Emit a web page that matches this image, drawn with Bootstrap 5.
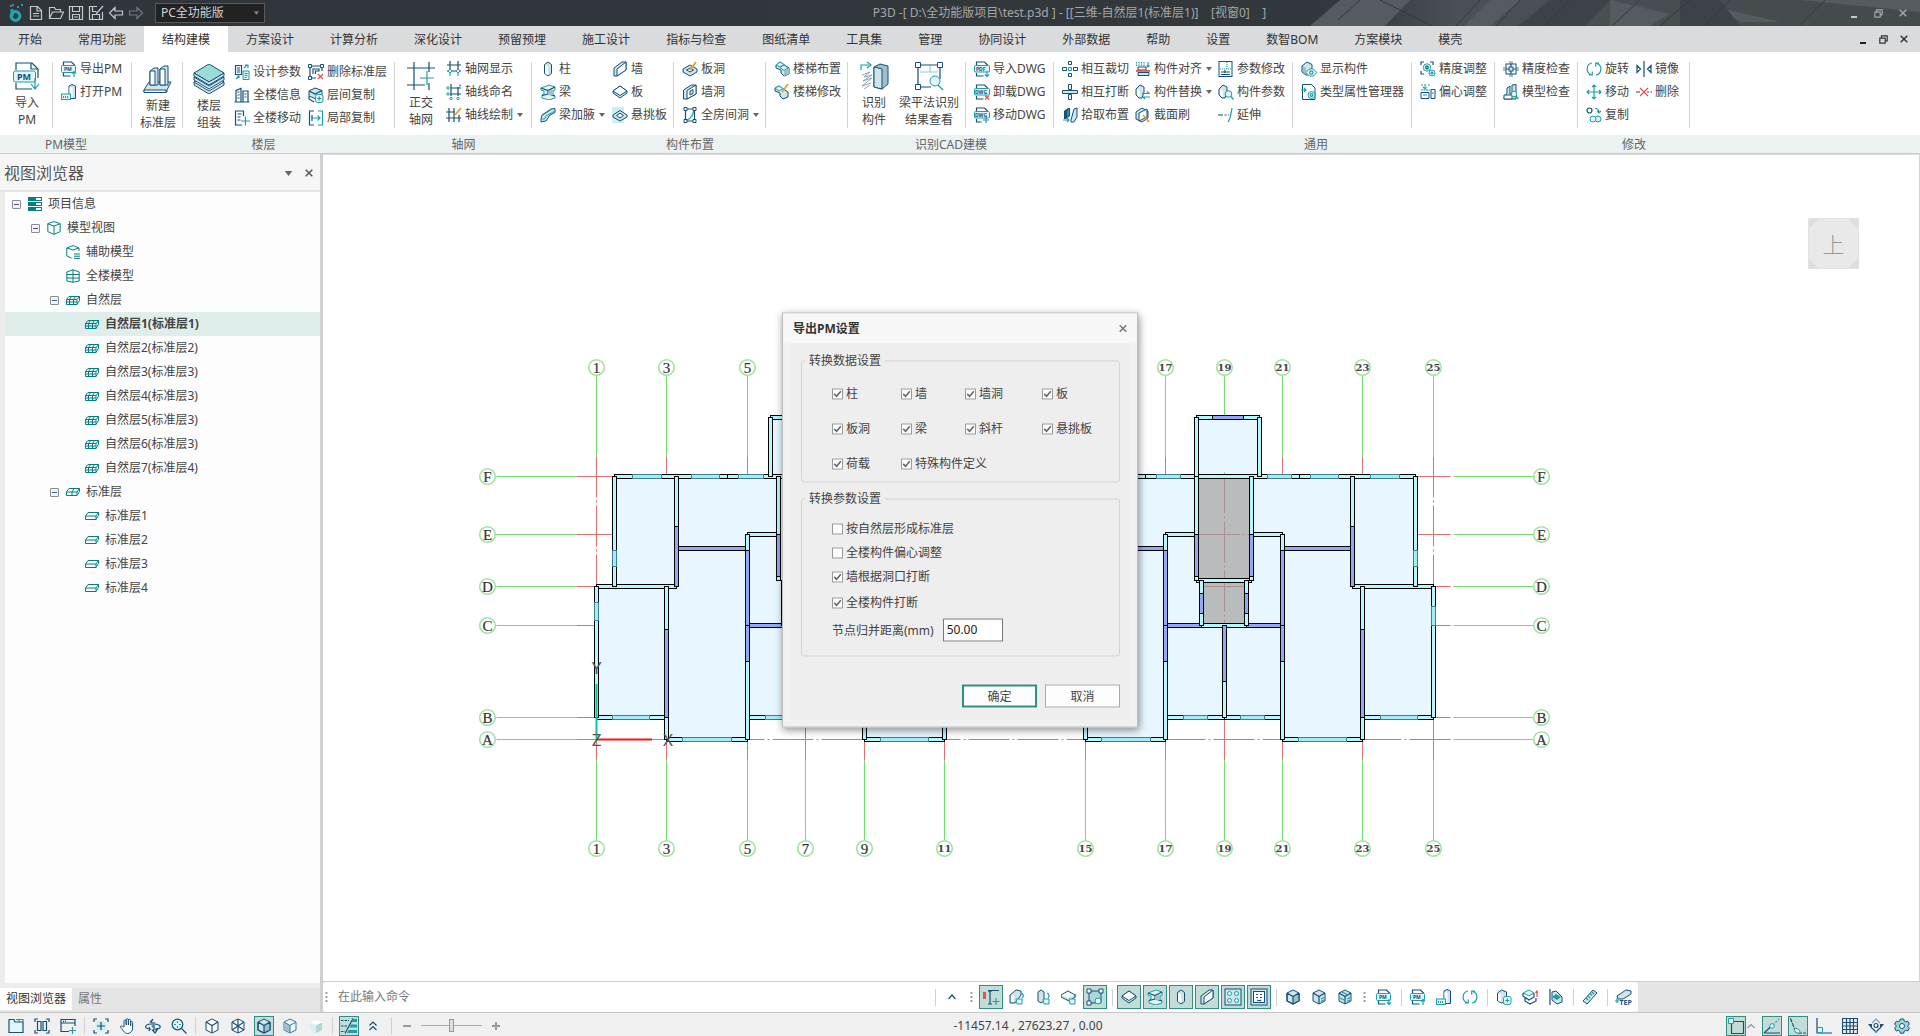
<!DOCTYPE html>
<html lang="zh-CN">
<head>
<meta charset="utf-8">
<meta name="viewport" content="width=device-width, initial-scale=1">
<title>P3D</title>
<link href="https://cdn.jsdelivr.net/npm/bootstrap@5.3.0/dist/css/bootstrap.min.css" rel="stylesheet">
<style>
:root{--navy:#14507a;--teal:#1b9fa8;--pale:#cfe5ea;--on:#c2ddd8;--on-line:#2f8f80}
body{font:12px/16px "Noto Sans","Noto Sans CJK SC",sans-serif;color:#444;background:#e5e5e5;overflow:hidden}
button,input,select{font:inherit;color:inherit}
svg{display:block;flex:none}
.sn{fill:none;stroke:var(--navy);stroke-width:1.2}
.st{fill:none;stroke:var(--teal);stroke-width:1.2}
.sf{fill:var(--pale);stroke:var(--navy);stroke-width:1}
.sw{fill:#fff;stroke:var(--navy);stroke-width:1}
.tw{fill:#dff5f6;stroke:var(--teal);stroke-width:1}
.ff{fill:#9fc0ca}
.fn{fill:var(--navy)}
.ft{fill:var(--teal)}
.sr{fill:none;stroke:#e8504a;stroke-width:1.2}
.so{fill:none;stroke:#f0992e;stroke-width:1.8}
.tg{fill:none;stroke:#008080;stroke-width:1}
.icon-text{font:bold 5px "Noto Sans",sans-serif;fill:var(--navy)}
.icon-text.mid-size{font-size:7px}
.icon-text.big-size{font-size:9px}
.i16{width:16px;height:16px}
.i28{width:30px;height:30px}
.plain-btn{border:0;background:none;padding:0;display:flex;align-items:center}

.title-bar{height:26px;background:linear-gradient(90deg,#2f3538 0,#32383b 70%,#4a5053 76%,#44494c 100%);color:#a4a7a9;position:relative}
.title-art{position:absolute;right:0;top:0;height:26px;width:640px}
.title-bar>*:not(.title-art){position:relative}
.logo{margin-left:8px}
.quick-icon{fill:none;stroke:#c5cacc;stroke-width:1.2}
.edition{width:110px;height:20px;margin-left:11px;background:#222;border:1px solid #5a5a5a;color:#d0d0d0;appearance:none;padding:0 5px;line-height:16px;
 background-image:url("data:image/svg+xml,%3Csvg xmlns='http://www.w3.org/2000/svg' viewBox='0 0 6 4'%3E%3Cpath d='M0 0h6L3 4z' fill='%23888'/%3E%3C/svg%3E");background-repeat:no-repeat;background-size:5px 4px;background-position:right 5px center}
.doc-title{white-space:pre}
.win-btns{gap:16px;padding-right:13px}
.menu-tabs{height:26px;background:#d9dbdc;color:#333}
.menu-tabs .nav-link{padding:0 18px;height:26px;line-height:27px;color:#333;border-radius:0}
.menu-tabs .nav-link.active{background:#fff}

.ribbon{background:#fff;border-bottom:1px solid #c9cccf}
.ribbon-body{height:83px;padding-top:5px}
.ribbon-part{display:flex;gap:7px;padding:0 7px 0 8px;position:relative}
.ribbon-part:last-child{flex-grow:1}
.ribbon-part::after{content:"";position:absolute;right:0;top:5px;height:66px;width:1px;background:#d4d4d4}
.ribbon-part.lowered>*{margin-top:3px}
.ribbon-part.roomy{padding:0 8px 0 9px}
.g-pm{width:132px}.g-floor{width:263px}.g-axis{width:137px}.g-place{width:316px}.g-cad{width:206px}.g-common{width:524px}.g-edit{width:112px}
.g-common .ribbon-part{padding-right:8px}
.g-common .ribbon-part:first-child{gap:6px}
.ribbon-col{display:flex;flex-direction:column}
.ribbon-col button{height:23px;gap:3px;white-space:nowrap}
.big-btn{flex-direction:column;min-width:36px;padding-top:4px;text-align:center;white-space:nowrap}
.big-btn span{margin-top:3px;line-height:17px}
.drop{width:6px;height:4px;margin-left:1px}
.ribbon-name{height:18px;background:#ecf1f2;text-align:center;line-height:19px;color:#666}

.side{width:323px;border-right:3px solid #d0d0d2;background:#ededed}
.side-head{height:38px;background:#f6f6f6;border-bottom:2px solid #e6e6e6;padding:2px 7px 0 4px;font-size:16px;color:#555}
.tree{background:#fdfdfd;margin:0 0 0 5px;line-height:24px}
.tree li{height:24px;display:flex;align-items:center;padding-left:7px}
.tree .lv1{padding-left:26px}.tree .lv2{padding-left:45px}.tree .lv3{padding-left:64px}
.tree .chosen{background:#e0eeeb;font-weight:bold}
.fold{width:9px;height:9px;border:1px solid #8c8c8c;border-radius:1px;background:linear-gradient(#3a56a0,#3a56a0) center/5px 1px no-repeat #f4f4f4;margin-right:7px;padding:0}
.fold.leaf{visibility:hidden}
.tree svg{width:14px;height:14px;margin-right:6px}
.side-tabs{height:29px;background:linear-gradient(#ededed 5px,#e5e5e5 5px);padding-top:5px}
.side-tabs .nav-link{padding:0 6px;height:22px;line-height:21px;color:#777}
.side-tabs .nav-link.active{background:#fff;color:#333}

.view-area{background:#fff;border-top:1px solid #dcdcdc;border-right:1px solid #d4d4d4;position:relative}
.plan{position:absolute;left:0;top:0}
.view-cube{position:absolute;right:60px;top:63px;width:51px;height:51px;border:1px solid #e2e2e2;color:#999;font-size:22px;font-weight:300;line-height:50px;text-align:center;
 background:linear-gradient(135deg,#dedede 7px,transparent 7px),linear-gradient(225deg,#dedede 7px,transparent 7px),linear-gradient(45deg,#dedede 7px,transparent 7px),linear-gradient(315deg,#dedede 7px,transparent 7px),#e9e9e9}
.slab{fill:#e8f6ff}.stair{fill:#b9bcbc}
.wc{fill:#b3f8ff;stroke:#000}.wb{fill:#92a8f8;stroke:#000}.wo{fill:#a5ecfa;stroke:#3f7f93}
.axr{stroke:#e86a6a;stroke-dasharray:41 3 2 3}.axrs{stroke:#e86a6a}.axg{stroke:#69e069}.axf{stroke:#b08f92;stroke-dasharray:41 3 2 3}
.axc{fill:#fff;stroke:#a4e0a4;stroke-width:1.6}
.axt{font:15px "Liberation Serif",serif;fill:#333;text-anchor:middle;stroke:#333;stroke-width:.2px}
.axt2{font:bold 10px "DejaVu Serif",serif;fill:#444;text-anchor:middle}
.ucs{font:17px "Noto Sans",sans-serif;fill:#555;text-anchor:middle}

.dock{height:31px;border-top:1px solid #cfcfcf;background:#e5e5e5}
.dock-bar{background:#fff;height:30px;gap:2px;padding-right:2px;border-radius:3px}
.command{border:0;outline:0;background:none;width:592px;padding:0}
.command::placeholder{color:#777}
.grip{width:3px;height:14px;background:radial-gradient(circle,#999 1px,transparent 1.2px) center/3px 4px;margin:0 4px}
.grip.lead-grip{margin:0 8px 0 2px}
.tool{width:24px;height:24px;border:1px solid transparent;justify-content:center}
.tool.on{background:var(--on);border-color:var(--on-line)}
.rule{width:1px;height:17px;background:#d0d0d0;margin:0 2px 0 3px}
.status{height:24px;border-top:1px solid #c6c6c6;background:#f0f0f0;padding:2px 8px 0 6px;gap:6px}
.status .tool{width:20px;height:20px}
.status .rule{margin:0}
.status .rule.wide-rule{margin:0 5px 0 4px}
.coords{padding-right:170px}
.zoom{appearance:none;width:61px;height:14px;background:linear-gradient(#aaa,#aaa) center/100% 1px no-repeat}
.zoom::-webkit-slider-thumb{appearance:none;width:5px;height:13px;border:1px solid #999;background:#ddd}

.export-box{width:356px;margin-top:2px;background:#f1f1f1;border:1px solid #bdbdbd;box-shadow:1px 2px 8px rgba(0,0,0,.45);z-index:5}
.export-head{height:30px;background:#f7f7f7;padding:0 10px;color:#333}
.export-head button{color:#777}
.export-body{margin:0 7px 7px;background:#eee;padding:9px 10px 12px 11px}
.option-set{border:1px solid #d3d3d3;border-radius:3px;margin-top:8px;padding-left:30px;position:relative}
.option-set legend{position:absolute;left:3px;top:-9px;width:auto;background:#eee;padding:0 4px;margin:0;font-size:12px;line-height:16px;float:none}
.pick{display:flex;align-items:center;gap:3px;white-space:nowrap}
.pick input{width:11px;height:11px;margin:0;border:1px solid #999;border-radius:0!important;flex:none}
.pick input:checked{background-color:#fff;border-color:#999;background-size:9px;background-position:center;background-image:url("data:image/svg+xml,%3Csvg xmlns='http://www.w3.org/2000/svg' viewBox='0 0 9 9'%3E%3Cpath d='M1.2 4.4 3.6 6.8 7.8 1.8' fill='none' stroke='%23666' stroke-width='1.6'/%3E%3C/svg%3E")}
.pick-grid{display:grid;grid-template-columns:69px 64px 77px 80px;row-gap:19px;padding:24px 0 10px}
.pick-list{display:flex;flex-direction:column;gap:8px;padding:21px 0 14px}
.pick-list .spaced{margin-top:2px}
.merge-box{width:60px;height:23px;border:1px solid #7a7a7a;background:#fff;color:#222;padding:0 3px 3px;margin-left:9px}
.ok-btn,.no-btn{width:75px;height:23px;padding:0;line-height:14px;border-radius:0;background:#fdfdfd;font-size:12px;color:#444}
.ok-btn{border:2px solid var(--on-line)}.no-btn{border:1px solid #aaa}
</style>
<script src="https://cdn.jsdelivr.net/npm/bootstrap@5.3.0/dist/js/bootstrap.bundle.min.js"></script>
</head>
<body class="d-flex flex-column vh-100">
<svg class="d-none" aria-hidden="true">
<symbol id="cube" viewBox="0 0 16 16"><path class="sw" d="M8 1l6 3v8l-6 3-6-3V4z"/><path class="sn" d="M2 4l6 3.500L14 4M8 7.500V15"/></symbol>
<symbol id="cubef" viewBox="0 0 16 16"><path class="sf" d="M8 1l6 3v8l-6 3-6-3V4z"/><path class="ff" d="M8 7.500L14 4v8l-6 3z"/><path class="sn" d="M2 4l6 3.500L14 4M8 7.500V15M2 4v8l6 3 6-3V4"/></symbol>
<symbol id="cubex" viewBox="0 0 16 16"><path class="sw" d="M8 1l6 3v8l-6 3-6-3V4z"/><path class="sn" d="M2 4l12 8M14 4L2 12M8 1v14"/></symbol>
<symbol id="cubeb" viewBox="0 0 16 16"><path fill="#eef6f8" stroke="#3a78a8" d="M8 1l6 3v8l-6 3-6-3V4z"/><path class="ff" d="M2.500 4.500l5.500 3v7l-5.500-3z"/><path fill="none" stroke="#3a78a8" d="M2 4l6 3.500L14 4M8 7.500V15"/></symbol>
<symbol id="cubeg" viewBox="0 0 16 16"><path fill="#dcedef" d="M8 1.500l6 3v7.500l-6 3-6-3V4.500z"/><path fill="#b3d6dc" d="M8 7l6-2.500v7.500l-6 3z"/><path fill="#fff" d="M8 1.500l6 3L8 7 2 4.500z"/></symbol>
<symbol id="cubed" viewBox="0 0 16 16"><path class="sf" d="M8 1l6 3v8l-6 3-6-3V4z"/><path class="sn" d="M2 4l6 3.500L14 4M8 7.500V15"/><path class="st" d="M10 10l3-1.500M10 12.500l3-1.500"/></symbol>
<symbol id="cubee" viewBox="0 0 16 16"><path class="sf" d="M8 1l6 3v8l-6 3-6-3V4z"/><path class="sn" d="M2 4l6 3.500L14 4M8 7.500V15"/><path class="st" d="M5 3l5 2.500M10 10l3-1.500M10 12.500l3-1.500M3 9l4 2"/></symbol>
<symbol id="slabi" viewBox="0 0 16 16"><path class="sf" d="M1 7l7-5 7 5v2l-7 5-7-5z"/><path fill="#fff" stroke="#14507a" d="M1 7l7-5 7 5-7 4.500z"/></symbol>
<symbol id="slabhole" viewBox="0 0 16 16"><rect width="12" height="16" fill="#cdeff2"/><path class="sf" d="M1 8l7-4.500L15 8v2l-7 4-7-4z"/><path class="sw" d="M4.500 8.500L8 6.200l3.500 2.300L8 11z"/></symbol>
<symbol id="slabpen" viewBox="0 0 16 16"><path class="sf" d="M1 8l7-4 7 4v3l-7 4-7-4z"/><path class="sw" d="M4.500 9L8 7l3.500 2L8 11z"/><path class="so" d="M8 9l6-8"/></symbol>
<symbol id="coli" viewBox="0 0 16 16"><path class="sf" d="M4.500 3.500L8 1l3.500 2.500v9L8 15l-3.500-2.500z"/><path fill="#fff" d="M5 4l3 1.500v8.800l-3-2z"/></symbol>
<symbol id="walli" viewBox="0 0 16 16"><path class="sf" d="M2 7l8-6h4v8l-9 6H2z"/><path class="sw" d="M5 8l9-7v8l-9 6z"/></symbol>
<symbol id="wallhole" viewBox="0 0 16 16"><path class="sf" d="M1.500 6l8-5H14v9l-9 5H1.500z"/><path class="sw" d="M5 6.500L14 1v9l-9 5z"/><path class="sf" d="M8 7l3-1.500v4L8 11z"/></symbol>
<symbol id="beami" viewBox="0 0 16 16"><path class="tw" d="M1 4l8-3 6 2v3l-2 1v4l2 1v2l-6 2-7-2v-3l2-1V7L1 6z"/><path class="sn" d="M1 4l7 2.500L15 3M8 6.500V10l-6 1.500M8 10l7 2"/><path class="ff" d="M8 7l5-1v5H8z"/></symbol>
<symbol id="haunch" viewBox="0 0 16 16"><path class="sf" d="M1 12l1-4 9-6 4-.5v4L10 8l-4 6-5 1z"/><path class="tw" d="M3 8l9-6M1.500 12l3 0L6 9l8-4.500"/></symbol>
<symbol id="room" viewBox="0 0 16 16"><path class="sn" d="M3.500 2h9M3.500 2v12h9V2"/><path class="st" d="M5 13c5-2 6-6 7-10"/><path class="sw" d="M2 .5h3v3H2zM11 .5h3v3h-3zM2 12.500h3v3H2zM11 12.500h3v3h-3z"/></symbol>
<symbol id="stair" viewBox="0 0 16 16"><path class="sf" d="M2 4l4-3 9 6v6l-5 2-3-3V9L2 7z"/><path class="tw" d="M2 4l4-3 4 2.500L6 6zM6 6.500L10 4l4 3-4 2.500z"/><path class="ff" d="M10 10l5-3v6l-5 2z"/></symbol>
<symbol id="stairpen" viewBox="0 0 16 16"><path class="sf" d="M1 4l4-2 9 6v5l-5 2-3-3V9L1 7z"/><path class="tw" d="M1 4l4-2 4 2.500L5 7z"/><path class="so" d="M8 8l6-8"/></symbol>
<symbol id="pmout" viewBox="0 0 16 16"><path class="sn" d="M2.500 4V1h8l3 3v1M2.500 12v3h7"/><rect class="tw" x=".5" y="4.500" width="14" height="7" rx="1"/><text class="icon-text" x="3" y="10">PM</text><path class="st" d="M13 16v-5M11 12.500l2-2 2 2"/></symbol>
<symbol id="pmin" viewBox="0 0 16 16"><path class="sn" d="M2.500 4V1h8l3 3v1M2.500 12v3h7"/><rect class="tw" x=".5" y="4.500" width="14" height="7" rx="1"/><text class="icon-text" x="3" y="10">PM</text><path class="st" d="M13 10v5M11 13.500l2 2 2-2"/></symbol>
<symbol id="pmopen" viewBox="0 0 16 16"><path class="sf" d="M8 2l3-1.500L14.500 2v12.500H8z"/><path fill="#fff" d="M8.500 3l3 1v10h-3z"/><rect class="tw" x=".5" y="10" width="9" height="5.500"/><path class="ft" d="M2 12h1v2H2zM4 12h1v2H4zM6 12h1v2H6z"/></symbol>
<symbol id="pdf" viewBox="0 0 16 16"><path class="sn" d="M2.500 4V1h8l3 3v1M2.500 12v3h7"/><rect class="tw" x=".5" y="4.500" width="15" height="6.500" rx="1"/><text class="icon-text" x="2" y="9.800">PDF</text><path class="st" d="M13 10v5M11 13.500l2 2 2-2"/></symbol>
<symbol id="dwgx" viewBox="0 0 16 16"><path class="sn" d="M2.500 4V1h8l3 3v1M2.500 12v3h7"/><rect class="tw" x=".5" y="4.500" width="15" height="6.500" rx="1"/><text class="icon-text" x="1" y="9.800">DWG</text><path class="sr" d="M11 11.500l4 4M15 11.500l-4 4"/></symbol>
<symbol id="dwgm" viewBox="0 0 16 16"><path class="sn" d="M2.500 4V1h8l3 3v1M2.500 12v3h5"/><rect class="tw" x=".5" y="4.500" width="15" height="6.500" rx="1"/><text class="icon-text" x="1" y="9.800">DWG</text><path class="st" d="M12 10v6M9 13h6"/></symbol>
<symbol id="params" viewBox="0 0 16 16"><path class="sn" d="M1.500 1.500h6v9h-6zM3 4h3M3 6h3M3 8h3"/><path class="tw" d="M9 7h6v8.500H9z"/><path class="st" d="M10.500 9.500h3M10.500 11.500h3M10.500 13.500h2M10 4l3-3M14 4V1h-3M2 15l3-3M5 14v-2H3"/></symbol>
<symbol id="build" viewBox="0 0 16 16"><path class="sn" d="M.5 15h15M2 15V3.500l5-2V15M9 15V4h5v11"/><path class="sn" d="M3.500 5h2M3.500 8h2M3.500 11h2M10.500 7h2M10.500 10h2"/></symbol>
<symbol id="floormove" viewBox="0 0 16 16"><path class="sn" d="M8 15H1.500V1h8v5M3.500 4h4M3.500 7h3M3.500 10h3"/><path class="st" d="M11.500 6.500v9M7 11h9"/></symbol>
<symbol id="delfloor" viewBox="0 0 16 16"><path class="sn" d="M3 2h10M2 3v10M3 14h5M14 3v4M5 10V5h6v2H7.500v3"/><path class="sw" d="M.5.5h3v3h-3zM12.500.5h3v3h-3zM.5 12.500h3v3h-3z"/><path class="sr" d="M10 10l5 5M15 10l-5 5"/></symbol>
<symbol id="copyfloor" viewBox="0 0 16 16"><path class="sf" d="M1 4l6-3 7 2.500v5L8 12l-7-3z"/><path class="sn" d="M1 4l6 3 7-3.500M1 9v3l5 3"/><rect class="tw" x="7.500" y="7.500" width="7.500" height="8" rx="2"/><path class="st" d="M11.300 9.500v4M9.300 11.500h4"/></symbol>
<symbol id="copycol" viewBox="0 0 16 16"><path class="sf" d="M1.500 4l4-3 5 2v9l-5 2-4-2z"/><path fill="#fff" d="M2 4.500l3 1V13l-3-1z"/><rect class="tw" x="7.500" y="7.500" width="7.500" height="8" rx="2"/><path class="st" d="M11.300 9.500v4M9.300 11.500h4"/></symbol>
<symbol id="copypart" viewBox="0 0 16 16"><path class="sn" d="M6 1H1.500v14H6M4 5v6"/><path class="st" d="M10 1h4.500v14H10M4 8h8M9.500 5.500L12 8l-2.500 2.500"/></symbol>
<symbol id="axshow" viewBox="0 0 16 16"><path class="sn" d="M1 4h14M4 0v12M12 0v12M1 10h14"/><path class="tw" d="M2 10l2-2 2 2-2 2zM10 10l2-2 2 2-2 2z"/><path class="st" d="M4 12v3M12 12v3"/></symbol>
<symbol id="axname" viewBox="0 0 16 16"><path class="sn" d="M5 4h10M5 0v12M12 3v9M4 10h11"/><circle class="tw" cx="2" cy="4" r="1.200"/><circle class="tw" cx="2" cy="10" r="1.200"/><circle class="tw" cx="5" cy="14.500" r="1.200"/><circle class="tw" cx="12" cy="14.500" r="1.200"/><circle class="ft" cx="14" cy="1.500" r="1"/></symbol>
<symbol id="axdraw" viewBox="0 0 16 16"><path class="sn" d="M0 5h9M3 1v14M8 1v14M13 8v7M0 11h15"/><path class="so" d="M9 8l6-7"/></symbol>
<symbol id="cross" viewBox="0 0 16 16"><path class="sw" d="M6.500.5h3v3h-3zM6.500 12.500h3v3h-3zM.5 6.500h4v3h-4zM11.500 6.500h4v3h-4z"/><path class="tw" d="M6.500 6.500h3v3h-3z"/></symbol>
<symbol id="cutoff" viewBox="0 0 16 16"><path class="sw" d="M6.500.5h3v5h-3zM6.500 10.500h3v5h-3z"/><path class="sf" d="M.5 6.500h15v3H.5z"/></symbol>
<symbol id="pickup" viewBox="0 0 16 16"><path class="fn" d="M2 4l4-3h2v8l-4 3H2z"/><path class="ft" d="M5 4l2-2v6L5 10z"/><path class="sf" d="M9 13l3-11 3-1v9l-3 5H9z"/><path class="st" d="M1 13h6M5 11l2 2-2 2" stroke-width="1.800"/></symbol>
<symbol id="align" viewBox="0 0 16 16"><path class="st" d="M1.500 1v4M4 1v4M6.500 1v4M9 1v4" stroke-dasharray="1.500 1"/><path class="st" d="M13 1v5M11.500 4.500L13 6l1.500-1.500"/><path class="sw" d="M3 6h8v3H3z"/><path d="M1 9h14v1.800H1z" fill="#e8504a"/><path class="sf" d="M3 11.500h11v3H3z"/></symbol>
<symbol id="swap" viewBox="0 0 16 16"><path class="sf" d="M1 5l4-4 4 2v5l-2 6H4l-3-3z"/><path fill="#fff" d="M2 5l3 2v6l-3-2z"/><path class="st" d="M7 9.500h7l-2-2M15 13H8l2 2"/></symbol>
<symbol id="brush" viewBox="0 0 16 16"><path class="sf" d="M1 5l6-4 6 3v7l-6 4-6-3z"/><path class="sw" d="M4 6l8-4v8l-8 4z"/><path class="so" d="M8 8l6 7"/></symbol>
<symbol id="editpar" viewBox="0 0 16 16"><rect class="sw" x="1" y=".5" width="13" height="15"/><path class="st" d="M9 1v7M2 8h11" stroke-dasharray="1 1"/><path class="sn" d="M3 11h9M3 13.500h9M7 9v3"/></symbol>
<symbol id="compar" viewBox="0 0 16 16"><path class="sf" d="M1 5l4-4 4 2v5l-2 6H4l-3-3z"/><path fill="#fff" d="M2 5l3 2v6l-3-2z"/><circle class="tw" cx="10.500" cy="10" r="3.300"/><path class="st" d="M13 12.500l2.500 3"/></symbol>
<symbol id="extend" viewBox="0 0 16 16"><path class="sn" d="M0 8h5M6.500 8h2M10 8h1"/><path class="st" d="M10 15c3-4 3-9 4-14"/></symbol>
<symbol id="showc" viewBox="0 0 16 16"><path class="sf" d="M1 5l5-4 5 2.500V7l-3 7H5l-4-3z"/><path class="ff" d="M2 5l3 2v6l-3-2z"/><path class="tw" d="M5 11.500c3-5 8-5 10.500 0-2.500 5-7.500 5-10.500 0z"/><circle class="st" cx="10.300" cy="11.500" r="1.700"/></symbol>
<symbol id="typemgr" viewBox="0 0 16 16"><path class="sw" d="M1.500.5h9l3.500 3.500v11.500H1.500z"/><path class="st" d="M0 6h5M3 4l2 2-2 2"/><circle class="tw" cx="10.500" cy="11" r="3.500"/><circle class="st" cx="10.500" cy="11" r="1.300"/></symbol>
<symbol id="gearset" viewBox="0 0 16 16"><path class="sn" d="M1 4V1h3M10 1h3v3M1 10v3h3"/><circle class="tw" cx="7" cy="6.500" r="3.700"/><circle class="sn" cx="7" cy="6.500" r="1.300"/><circle class="tw" cx="12" cy="12" r="3"/><circle class="st" cx="12" cy="12" r="1"/></symbol>
<symbol id="offset" viewBox="0 0 16 16"><path class="st" d="M5 0v5M3 3l2 2 2-2M1 1h2M8 1h2M1 6h9" stroke-dasharray="2 .5"/><path class="sw" d="M1 8.500h8v6H1zM11 5.500h4v9h-4z"/><path class="st" d="M3 11h4M12 9h2"/></symbol>
<symbol id="target" viewBox="0 0 16 16"><path fill="#a9c1d2" d="M6 0h4v16H6zM0 6h16v4H0z"/><rect x="3" y="3" width="10" height="10" class="sw"/><rect x="6" y="6" width="4" height="4" class="sf"/><path class="sn" d="M8 3v3M8 10v3M3 8h3M10 8h3"/></symbol>
<symbol id="modelchk" viewBox="0 0 16 16"><path class="sf" d="M1 14l3-5V4l3-2v8h2V1l4-.500V15H1z"/><path class="sw" d="M1 11h8v4H1z"/><circle class="tw" cx="11" cy="10" r="2.800"/><path class="st" d="M13 12l2.500 3"/></symbol>
<symbol id="rotate" viewBox="0 0 16 16"><path class="st" d="M6 2A6 6 0 0 0 5 13.500M10 14A6 6 0 0 0 11 2.500M3 13.800h3.300V10.500M13 2.200H9.700v3.300" stroke-width="1.500"/></symbol>
<symbol id="movei" viewBox="0 0 16 16"><path class="st" d="M8 1v14M1 8h14M6 3l2-2 2 2M6 13l2 2 2-2M3 6L1 8l2 2M13 6l2 2-2 2"/></symbol>
<symbol id="copyi" viewBox="0 0 16 16"><circle class="sn" cx="3.500" cy="3.500" r="2.500"/><path class="st" d="M9 1.500c3 0 4 1 4 4M11 4l2 2 2-2"/><circle class="tw" cx="12" cy="12" r="3"/><circle class="tw" cx="7" cy="12" r="3"/></symbol>
<symbol id="mirror" viewBox="0 0 16 16"><path class="sn" d="M8 0v16M1 4.500L4.500 8 1 11.500zM15 4.500L11.500 8l3.500 3.500z"/></symbol>
<symbol id="erase" viewBox="0 0 16 16"><path class="sn" d="M0 8h4M11 8h2M14.500 8H16"/><path class="sr" d="M4 4l8 8M12 4l-8 8"/></symbol>

<symbol id="newfolder" viewBox="0 0 16 16"><path fill="#dff7fa" stroke="#14507a" stroke-width="1.200" d="M1 1.500h5l1 2.500h8v10.500H1z"/><path class="st" d="M8 1.500h7v2.500M11 1.500V4"/></symbol>
<symbol id="panes" viewBox="0 0 16 16"><path class="sn" d="M1 4V1h3M12 1h3v3M15 12v3h-3M4 15H1v-3M3.500 3.500h3.500v9H3.500zM9 3.500h3.500v9H9z"/></symbol>
<symbol id="addwin" viewBox="0 0 16 16"><path class="sn" d="M9 13.500H1v-12h14V8M1 5h14M3 3.300h1M5 3.300h1"/><path class="st" d="M12.500 9v7M9 12.500h7"/></symbol>
<symbol id="fit" viewBox="0 0 16 16"><circle cx="8" cy="8" r="5.500" fill="#cbeef0"/><path class="sn" d="M1 4V1h3M12 1h3v3M15 12v3h-3M4 15H1v-3"/><path class="sn" d="M8 4v8M4 8h8" stroke-width="1.800"/></symbol>
<symbol id="hand" viewBox="0 0 16 16"><path class="sw" d="M5 9V3.200a1.100 1.100 0 0 1 2.200 0V7 1.800a1.100 1.100 0 0 1 2.200 0V7 2.500a1.100 1.100 0 0 1 2.200 0V8 4.500a1 1 0 0 1 2 0V10c0 3-2 5.500-5 5.500-2.500 0-4-2-7-6.500C1 8 3 7.500 4 8.500z" stroke-width="1.100"/></symbol>
<symbol id="orbit" viewBox="0 0 16 16"><path class="sn" d="M8 1L5.500 4H7v3.500M9 4v8H7.500L10 15l2-3h-1.500M10 6c8 1 6 5 0 5M6 6C-1 6.500-1 11 5 11l-1-2M5 11l-1 2"/><circle class="ft" cx="8" cy="8.500" r="1.300"/></symbol>
<symbol id="zoomer" viewBox="0 0 16 16"><circle cx="6.500" cy="6.500" r="5.300" fill="#dff5f6" stroke="#14507a" stroke-width="1.200"/><path class="st" d="M6.500 3v2M6.500 8v2M3 6.500h2M8 6.500h2" stroke-width="1.800"/><path class="sn" d="M10.500 10.500L15.500 15.500" stroke-width="1.600"/></symbol>
<symbol id="linew" viewBox="0 0 16 16"><path class="sn" d="M0 2.500h8M0 8h6M0 13.500h4" stroke-dasharray="2.500 1"/><path class="sn" d="M4 15.500L12 .5"/><path class="ft" d="M12 1h4v3h-5.500zM10 6.500h6v3H8.500zM7.500 12H16v3H6z"/></symbol>
<symbol id="chev2" viewBox="0 0 16 16"><path class="sn" d="M4.500 7.500L8 4l3.500 3.500M4.500 12L8 8.500l3.500 3.500"/></symbol>
<symbol id="chev" viewBox="0 0 16 16"><path class="sn" d="M4.500 10L8 6l3.500 4"/></symbol>
<symbol id="snapbox" viewBox="0 0 18 18"><path class="sn" d="M4.500 4.500h12v12h-12z"/><path class="tw" d="M1.500 1.500h5v5h-5z"/></symbol>
<symbol id="snapline" viewBox="0 0 18 18"><path class="sn" d="M1 16h16M1 16L8 9.500"/><path class="sn" d="M10 8l6-6" stroke-dasharray="2 1.500" opacity=".6"/><circle class="tw" cx="9" cy="9" r="2.300"/></symbol>
<symbol id="snapang" viewBox="0 0 18 18"><path class="sn" d="M1.500 1.500L7 15.500M9 16h8" stroke-dasharray="4 1"/><path class="tw" d="M5 12a4 4 0 0 1 6 4H7z"/></symbol>
<symbol id="ortho" viewBox="0 0 16 16"><path class="sn" d="M1 0v15h15"/><path class="tw" d="M1.500 9.500h5v5h-5z"/></symbol>
<symbol id="gridi" viewBox="0 0 16 16"><path class="sn" d="M.5.500h15v15H.5zM.5 4.500h15M.5 8h15M.5 11.500h15M4.500.5v15M8 .5v15M11.500.5v15"/></symbol>
<symbol id="diamond" viewBox="0 0 16 16"><path class="sn" d="M4 5l4-4 4 4" opacity=".5"/><path class="fn" d="M0 6h4v5zM16 6h-4v5z"/><path class="sn" d="M4 10l4 4 4-4"/><circle class="sn" cx="8" cy="7.500" r="2"/><path class="ft" d="M6.500 13h3L8 15.500z"/></symbol>
<symbol id="gear" viewBox="0 0 16 16"><path fill="#9cd4d8" stroke="#14507a" d="M6.300 1h3.400l.5 2 1.500.8 2-.6 1.700 3-1.500 1.300v1L15.400 10l-1.700 3-2-.6-1.500.8-.5 2H6.300l-.5-2-1.500-.8-2 .6-1.700-3L2.100 8.500v-1L.6 6.200l1.700-3 2 .6L5.800 3z"/><circle class="sw" cx="8" cy="8" r="2.500"/></symbol>

<symbol id="redaxis" viewBox="0 0 18 18"><path fill="#e8504a" d="M1 4h3v7H1z"/><path class="sn" d="M6 2.500h11M8 2v14M6 3h4M6 16h4" stroke-width="1.500"/><path class="st" d="M14 10v7M10.500 13.500h7"/></symbol>
<symbol id="walltrash" viewBox="0 0 16 16"><path class="sf" d="M1 6l6-5 5 1v4L6 14H1z"/><path fill="#fff" d="M2 6l3 1v6H2z"/><path class="tw" d="M7 10h6v5H8z"/><path class="st" d="M13 9c2-2 1-4 0-5"/></symbol>
<symbol id="coltrash" viewBox="0 0 16 16"><path class="sf" d="M3 3l3-2 3 2v9l-3 2-3-2z"/><path class="tw" d="M8 10h6v5H9z"/><path class="st" d="M13 9c2-2 1-4-1-5"/></symbol>
<symbol id="slabtrash" viewBox="0 0 16 16"><path class="sf" d="M0 6l7-4 7 4v2l-6 4-8-4z"/><path fill="#fff" d="M1 6l6-3 6 3-6 3z"/><path class="tw" d="M8 10h6v5H9z"/><path class="st" d="M13 9c2-1 2-3 1-4"/></symbol>
<symbol id="frame" viewBox="0 0 18 18"><path fill="#a9d8d6" stroke="#14507a" d="M3 3h12v12H3z"/><path class="sw" d="M1 1h4v4H1zM13 1h4v4h-4zM1 13h4v4H1z"/><circle class="tw" cx="12" cy="13" r="3"/></symbol>
<symbol id="frame4" viewBox="0 0 18 18"><rect x="1" y="1" width="16" height="16" class="sf"/><circle class="tw" cx="5.500" cy="5.500" r="2"/><circle class="tw" cx="12.500" cy="5.500" r="2"/><circle class="tw" cx="5.500" cy="12.500" r="2"/><circle class="tw" cx="12.500" cy="12.500" r="2"/></symbol>
<symbol id="frame5" viewBox="0 0 18 18"><rect x="1" y="1" width="16" height="16" class="sf"/><rect x="3.500" y="3.500" width="11" height="11" class="sw"/><path class="sn" d="M6 6.500h2M10 6.500h2M6 9.500h2M10 9.500h2M7 12c2 1 3 1 4 0"/></symbol>
<symbol id="stack" viewBox="0 0 16 16"><path class="tw" d="M1 4l6-3 5 3-5 3z"/><path class="sn" d="M1 4v3l6 4 5-3V4M3 9v3l5 3 6-3V9"/><path class="sr" d="M15 8V2M13.500 4L15 2l1 2"/></symbol>
<symbol id="halfcol" viewBox="0 0 16 16"><path class="sn" d="M2 0v16"/><path class="sf" d="M4 3l4-1 6 6v5l-5 2-5-4z"/><path class="ft" d="M4 8l4-3 5 3-4 3z"/></symbol>
<symbol id="ruler" viewBox="0 0 16 16"><path class="sf" d="M1 12L11 1l4 3L5 15z"/><path class="st" d="M4 9l2 2M6 7l2 2M8 4.500l2 2M10 3l2 2"/></symbol>
<symbol id="step" viewBox="0 0 18 18"><path class="sf" d="M2 8l9-6 5 1v3l-8 5H3z"/><path class="st" d="M2 10v5M0 13h4"/><text class="icon-text mid-size" x="4.500" y="17">TEP</text></symbol>

<symbol id="server" viewBox="0 0 14 14"><path fill="#008080" d="M0 0h14v4H0zM0 5h14v4H0zM0 10h14v4H0z"/><path fill="#fff" d="M8 1h5v2H8zM8 6h5v2H8zM8 11h5v2H8z"/></symbol>
<symbol id="tcube" viewBox="0 0 14 14"><path class="tg" d="M7 .6l6.200 2v8L7 13.400.8 10.600v-8zM.8 2.800L7 5l6.200-2.200M7 5v8"/></symbol>
<symbol id="tcubel" viewBox="0 0 14 14"><path class="tg" d="M5.500 13L.8 11V3L7 .6 13 3v3M.8 3L7 5l6-2M8 9h6M8 11.200h6M8 13.400h6"/></symbol>
<symbol id="tbuild" viewBox="0 0 14 14"><path class="tg" d="M.8 3L7 .8 13.200 3v9L7 13.200.8 12zM7 .8v12.400M.8 5.500h12.400M.8 9h12.400"/></symbol>
<symbol id="tfloor" viewBox="0 0 14 14"><path class="tg" d="M.5 6.500L3 3.500h10.500v4L11 11.500H.5zM.5 6.500H11l2.500-3M11 6.500v5M3.500 11.500v-5l2-3M7.500 11.500v-5l2-3M.5 9H11"/></symbol>
<symbol id="tstd" viewBox="0 0 14 14"><path class="tg" d="M.5 7L3 3.500h10.500v3L11 10.500H.5zM.5 7H11l2.500-3.500M11 7v3.500M6 10.500V7l2-3.500"/></symbol>
<symbol id="tflat" viewBox="0 0 14 14"><path class="tg" d="M.5 7L3 3.500h10.500v3L11 10.500H.5zM.5 7H11l2.500-3.500M11 7v3.500"/></symbol>
<symbol id="drop" viewBox="0 0 6 4"><path d="M0 0h6L3 4z" fill="#666"/></symbol>
<symbol id="xmark" viewBox="0 0 8 8"><path d="M.7.7l6.600 6.600M7.300.7L.7 7.300" fill="none" stroke="currentColor" stroke-width="1.500"/></symbol>
<symbol id="restore" viewBox="0 0 9 9"><path d="M2.500 2.500V.8h5.700v5H6.500M.8 3.200h5.400v5H.8z" fill="none" stroke="currentColor" stroke-width="1.200"/></symbol>
</svg>

<header class="title-bar d-flex align-items-center">
<svg class="title-art" viewBox="0 0 640 26" preserveAspectRatio="none"><path fill="#555b5e" d="M60 0h70l-25 26H30zM210 0h30l-30 26h-26zM330 0l60 14-20 12h-40zM440 8l60 14h-40zM520 0h120v12z"/><path fill="#3c4245" d="M270 0h60l-26 26h-66zM400 0h40l20 26h-60z"/><path stroke="#33393c" fill="none" d="M80 0L58 20M100 0l52 26M200 0l-24 26M240 0l-24 26M290 0l-26 26M360 0l-28 26M410 0l-30 26M450 0l-26 26M545 0l-26 26"/></svg>
<svg class="logo" width="16" height="20" viewBox="0 0 16 20"><path d="M2 3h2M5 1v2M9 4h2M13 2h2" stroke="#35b6bf" stroke-width="1.500"/><path d="M4 6v7" stroke="#1fa6b0" stroke-width="3"/><circle cx="7.500" cy="13" r="4.300" fill="none" stroke="#1fa6b0" stroke-width="3.200"/></svg>
<div class="d-flex align-items-center gap-1 ps-1">
<button class="plain-btn" aria-label="新建"><svg width="16" height="16" viewBox="0 0 16 16" class="quick-icon"><path d="M2.500 1.500h7l4 4v9h-11zM9 1.500V6h4.500M5 8.500h6M5 11h6"/></svg></button>
<button class="plain-btn" aria-label="打开"><svg width="16" height="16" viewBox="0 0 16 16" class="quick-icon"><path d="M1.500 13.500v-11h5l1 2h5v2.500M1.500 13.500l3-6.500h11l-3 6.500z"/></svg></button>
<button class="plain-btn" aria-label="保存"><svg width="16" height="16" viewBox="0 0 16 16" class="quick-icon"><path d="M1.500 1.500h13v13h-13zM4.500 1.500v5h7v-5M4.500 14.500v-5h7v5M6 12h4"/></svg></button>
<button class="plain-btn" aria-label="另存"><svg width="16" height="16" viewBox="0 0 16 16" class="quick-icon"><path d="M9 1.500H1.500v13h13V7M4.500 1.500v5h4M4.500 14.500v-5h7v5M15 1L8 9"/></svg></button>
<button class="plain-btn" aria-label="撤销"><svg width="16" height="16" viewBox="0 0 16 16" class="quick-icon"><path d="M1.500 8L7 2.500V6h7.500v4H7v3.500z"/></svg></button>
<button class="plain-btn" aria-label="重做"><svg width="16" height="16" viewBox="0 0 16 16" class="quick-icon" opacity=".45"><path d="M14.500 8L9 2.500V6H1.500v4H9v3.500z"/></svg></button>
</div>
<select class="edition" aria-label="版本"><option>PC全功能版</option></select>
<div class="doc-title flex-grow-1 text-center ps-4">P3D -[ D:\全功能版项目\test.p3d ] - [[三维-自然层1(标准层1)]    [视窗0]    ]</div>
<div class="win-btns d-flex align-items-center">
<button class="plain-btn" aria-label="最小化"><svg width="8" height="9" viewBox="0 0 8 9"><path d="M1 7h6v2H1z" fill="#c5c8ca"/></svg></button>
<button class="plain-btn" aria-label="还原"><svg width="9" height="9"><use href="#restore"/></svg></button>
<button class="plain-btn" aria-label="关闭"><svg width="8" height="8"><use href="#xmark"/></svg></button>
</div>
</header>

<nav class="menu-tabs d-flex align-items-center">
<div class="nav flex-nowrap flex-grow-1 text-nowrap">
<a class="nav-link" href="#">开始</a><a class="nav-link" href="#">常用功能</a><a class="nav-link active" href="#">结构建模</a><a class="nav-link" href="#">方案设计</a><a class="nav-link" href="#">计算分析</a><a class="nav-link" href="#">深化设计</a><a class="nav-link" href="#">预留预埋</a><a class="nav-link" href="#">施工设计</a><a class="nav-link" href="#">指标与检查</a><a class="nav-link" href="#">图纸清单</a><a class="nav-link" href="#">工具集</a><a class="nav-link" href="#">管理</a><a class="nav-link" href="#">协同设计</a><a class="nav-link" href="#">外部数据</a><a class="nav-link" href="#">帮助</a><a class="nav-link" href="#">设置</a><a class="nav-link" href="#">数智BOM</a><a class="nav-link" href="#">方案模块</a><a class="nav-link" href="#">模壳</a>
</div>
<div class="d-flex align-items-center gap-2 pe-2 me-1">
<button class="plain-btn me-1" aria-label="最小化视窗"><svg width="8" height="9" viewBox="0 0 8 9"><path d="M1 7h6v2H1z" fill="#222"/></svg></button>
<button class="plain-btn me-1" aria-label="还原视窗"><svg width="9" height="9"><use href="#restore"/></svg></button>
<button class="plain-btn" aria-label="关闭视窗"><svg width="8" height="8"><use href="#xmark"/></svg></button>
</div>
</nav>

<section class="ribbon d-flex">
<div class="g-pm"><div class="ribbon-body d-flex">
 <div class="ribbon-part roomy"><button class="plain-btn big-btn"><svg class="i28" viewBox="0 0 30 30"><path class="sn" d="M4 9V2h16l6 6v9M4 22v6h16"/><path class="sn" d="M19 2v6h7"/><rect class="tw" x="1.500" y="10" width="22" height="11" rx="2"/><text class="icon-text big-size" x="5" y="19">PM</text><path class="st" d="M23 17v11M19 23l4 5 4-5" stroke-width="2"/></svg><span>导入<br>PM</span></button></div>
 <div class="ribbon-part"><div class="ribbon-col"><button class="plain-btn"><svg class="i16"><use href="#pmout"/></svg>导出PM</button><button class="plain-btn"><svg class="i16"><use href="#pmopen"/></svg>打开PM</button></div></div>
</div><div class="ribbon-name">PM模型</div></div>
<div class="g-floor"><div class="ribbon-body d-flex">
 <div class="ribbon-part lowered"><button class="plain-btn big-btn"><svg class="i28" viewBox="0 0 30 30"><path class="sf" d="M1 26l5-8h22l-4 8v2H1z"/><path class="sw" d="M1 26h22v2.500H1z"/><path class="sf" d="M7 21V7l4-3h4v17z"/><path class="sw" d="M7 7h5v14H7z"/><path class="sf" d="M17 21V5l4-3h4v19z"/><path class="sw" d="M17 5h5v16h-5z"/></svg><span>新建<br>标准层</span></button></div>
 <div class="ribbon-part lowered"><button class="plain-btn big-btn"><svg width="32" height="30" viewBox="0 0 32 30"><path class="sf" d="M1 18v3l15 9 15-9v-3z"/><path class="sw" d="M1 18l15-9 15 9-15 9z"/><path class="sf" d="M1 13v3l15 9 15-9v-3z"/><path class="sw" d="M1 13l15-9 15 9-15 9z"/><path fill="#9cdcd8" stroke="#14507a" d="M1 9l15-9 15 9-15 9z"/><path class="sf" d="M1 9v3l15 9 15-9V9l-15 9z"/></svg><span>楼层<br>组装</span></button>
 <div class="ribbon-col"><button class="plain-btn"><svg class="i16"><use href="#params"/></svg>设计参数</button><button class="plain-btn"><svg class="i16"><use href="#build"/></svg>全楼信息</button><button class="plain-btn"><svg class="i16"><use href="#floormove"/></svg>全楼移动</button></div>
 <div class="ribbon-col"><button class="plain-btn"><svg class="i16"><use href="#delfloor"/></svg>删除标准层</button><button class="plain-btn"><svg class="i16"><use href="#copyfloor"/></svg>层间复制</button><button class="plain-btn"><svg class="i16"><use href="#copypart"/></svg>局部复制</button></div></div>
</div><div class="ribbon-name">楼层</div></div>
<div class="g-axis"><div class="ribbon-body d-flex">
 <div class="ribbon-part"><button class="plain-btn big-btn"><svg class="i28" viewBox="0 0 30 30"><path class="sn" d="M1 7h28M1 24h18M8 1v28M23 1v10M23 22v7"/><path class="st" d="M21 10v14M14 17h14" stroke-width="2.500"/></svg><span>正交<br>轴网</span></button>
 <div class="ribbon-col"><button class="plain-btn"><svg class="i16"><use href="#axshow"/></svg>轴网显示</button><button class="plain-btn"><svg class="i16"><use href="#axname"/></svg>轴线命名</button><button class="plain-btn"><svg class="i16"><use href="#axdraw"/></svg>轴线绘制<svg class="drop"><use href="#drop"/></svg></button></div></div>
</div><div class="ribbon-name">轴网</div></div>
<div class="g-place"><div class="ribbon-body d-flex">
 <div class="ribbon-part"><div class="ribbon-col"><button class="plain-btn"><svg class="i16"><use href="#coli"/></svg>柱</button><button class="plain-btn"><svg class="i16"><use href="#beami"/></svg>梁</button><button class="plain-btn"><svg class="i16"><use href="#haunch"/></svg>梁加腋<svg class="drop"><use href="#drop"/></svg></button></div>
 <div class="ribbon-col"><button class="plain-btn"><svg class="i16"><use href="#walli"/></svg>墙</button><button class="plain-btn"><svg class="i16"><use href="#slabi"/></svg>板</button><button class="plain-btn"><svg class="i16"><use href="#slabhole"/></svg>悬挑板</button></div></div>
 <div class="ribbon-part"><div class="ribbon-col"><button class="plain-btn"><svg class="i16"><use href="#slabpen"/></svg>板洞</button><button class="plain-btn"><svg class="i16"><use href="#wallhole"/></svg>墙洞</button><button class="plain-btn"><svg class="i16"><use href="#room"/></svg>全房间洞<svg class="drop"><use href="#drop"/></svg></button></div></div>
 <div class="ribbon-part"><div class="ribbon-col"><button class="plain-btn"><svg class="i16"><use href="#stair"/></svg>楼梯布置</button><button class="plain-btn"><svg class="i16"><use href="#stairpen"/></svg>楼梯修改</button></div></div>
</div><div class="ribbon-name">构件布置</div></div>
<div class="g-cad"><div class="ribbon-body d-flex">
 <div class="ribbon-part"><button class="plain-btn big-btn"><svg class="i28" viewBox="0 0 30 30"><path class="st" d="M2 9V4h8M8 1l4 3-4 3" stroke-width="1.600"/><path fill="none" stroke="#8aa5b5" d="M3 14l8-3-6 5 8-2-9 6 9-3-10 8 9-3M5 28l6-4"/><path class="ff" stroke="#14507a" d="M15 6l6-3 8 2v18l-6 5-8-2z"/><path class="sf" d="M15 6l8 2v20l-8-2z"/></svg><span>识别<br>构件</span></button>
 <button class="plain-btn big-btn"><svg class="i28" viewBox="0 0 30 30"><path class="sn" d="M4 4h22M4 4v22M26 4v14M4 26h13" stroke-width="1.600"/><path class="st" d="M6 11h18M16 5v6" stroke-width="2" opacity=".5"/><path class="sw" d="M1.500 1.500h5v5h-5zM23.500 1.500h5v5h-5zM1.500 23.500h5v5h-5z" stroke-width="1.400"/><circle class="tw" cx="21" cy="20" r="5"/><path class="st" d="M24 24l5 5" stroke-width="1.800"/></svg><span>梁平法识别<br>结果查看</span></button></div>
 <div class="ribbon-part"><div class="ribbon-col"><button class="plain-btn"><svg class="i16"><use href="#pdf"/></svg>导入DWG</button><button class="plain-btn"><svg class="i16"><use href="#dwgx"/></svg>卸载DWG</button><button class="plain-btn"><svg class="i16"><use href="#dwgm"/></svg>移动DWG</button></div></div>
</div><div class="ribbon-name">识别CAD建模</div></div>
<div class="g-common"><div class="ribbon-body d-flex">
 <div class="ribbon-part"><div class="ribbon-col"><button class="plain-btn"><svg class="i16"><use href="#cross"/></svg>相互裁切</button><button class="plain-btn"><svg class="i16"><use href="#cutoff"/></svg>相互打断</button><button class="plain-btn"><svg class="i16"><use href="#pickup"/></svg>拾取布置</button></div>
 <div class="ribbon-col"><button class="plain-btn"><svg class="i16"><use href="#align"/></svg>构件对齐<svg class="drop"><use href="#drop"/></svg></button><button class="plain-btn"><svg class="i16"><use href="#swap"/></svg>构件替换<svg class="drop"><use href="#drop"/></svg></button><button class="plain-btn"><svg class="i16"><use href="#brush"/></svg>截面刷</button></div>
 <div class="ribbon-col"><button class="plain-btn"><svg class="i16"><use href="#editpar"/></svg>参数修改</button><button class="plain-btn"><svg class="i16"><use href="#compar"/></svg>构件参数</button><button class="plain-btn"><svg class="i16"><use href="#extend"/></svg>延伸</button></div></div>
 <div class="ribbon-part"><div class="ribbon-col"><button class="plain-btn"><svg class="i16"><use href="#showc"/></svg>显示构件</button><button class="plain-btn"><svg class="i16"><use href="#typemgr"/></svg>类型属性管理器</button></div></div>
 <div class="ribbon-part"><div class="ribbon-col"><button class="plain-btn"><svg class="i16"><use href="#gearset"/></svg>精度调整</button><button class="plain-btn"><svg class="i16"><use href="#offset"/></svg>偏心调整</button></div></div>
 <div class="ribbon-part"><div class="ribbon-col"><button class="plain-btn"><svg class="i16"><use href="#target"/></svg>精度检查</button><button class="plain-btn"><svg class="i16"><use href="#modelchk"/></svg>模型检查</button></div></div>
</div><div class="ribbon-name">通用</div></div>
<div class="g-edit"><div class="ribbon-body d-flex">
 <div class="ribbon-part"><div class="ribbon-col"><button class="plain-btn"><svg class="i16"><use href="#rotate"/></svg>旋转</button><button class="plain-btn"><svg class="i16"><use href="#movei"/></svg>移动</button><button class="plain-btn"><svg class="i16"><use href="#copyi"/></svg>复制</button></div>
 <div class="ribbon-col"><button class="plain-btn"><svg class="i16"><use href="#mirror"/></svg>镜像</button><button class="plain-btn"><svg class="i16"><use href="#erase"/></svg>删除</button></div></div>
</div><div class="ribbon-name">修改</div></div>
<div class="flex-grow-1 d-flex flex-column justify-content-end"><div class="ribbon-name"></div></div>
</section>

<div class="d-flex flex-grow-1 overflow-hidden">
<aside class="side d-flex flex-column flex-shrink-0">
<div class="side-head d-flex align-items-center"><span class="flex-grow-1">视图浏览器</span><svg width="9" height="5" class="me-2"><use href="#drop"/></svg><button class="plain-btn ms-1" aria-label="关闭面板"><svg width="8" height="8"><use href="#xmark"/></svg></button></div>
<ul class="tree list-unstyled flex-grow-1">
<li><button class="fold" aria-label="折叠"></button><svg><use href="#server"/></svg>项目信息</li>
<li class="lv1"><button class="fold" aria-label="折叠"></button><svg><use href="#tcube"/></svg>模型视图</li>
<li class="lv2"><i class="fold leaf"></i><svg><use href="#tcubel"/></svg>辅助模型</li>
<li class="lv2"><i class="fold leaf"></i><svg><use href="#tbuild"/></svg>全楼模型</li>
<li class="lv2"><button class="fold" aria-label="折叠"></button><svg><use href="#tfloor"/></svg>自然层</li>
<li class="lv3 chosen"><i class="fold leaf"></i><svg><use href="#tfloor"/></svg>自然层1(标准层1)</li>
<li class="lv3"><i class="fold leaf"></i><svg><use href="#tfloor"/></svg>自然层2(标准层2)</li>
<li class="lv3"><i class="fold leaf"></i><svg><use href="#tfloor"/></svg>自然层3(标准层3)</li>
<li class="lv3"><i class="fold leaf"></i><svg><use href="#tfloor"/></svg>自然层4(标准层3)</li>
<li class="lv3"><i class="fold leaf"></i><svg><use href="#tfloor"/></svg>自然层5(标准层3)</li>
<li class="lv3"><i class="fold leaf"></i><svg><use href="#tfloor"/></svg>自然层6(标准层3)</li>
<li class="lv3"><i class="fold leaf"></i><svg><use href="#tfloor"/></svg>自然层7(标准层4)</li>
<li class="lv2"><button class="fold" aria-label="折叠"></button><svg><use href="#tstd"/></svg>标准层</li>
<li class="lv3"><i class="fold leaf"></i><svg><use href="#tflat"/></svg>标准层1</li>
<li class="lv3"><i class="fold leaf"></i><svg><use href="#tflat"/></svg>标准层2</li>
<li class="lv3"><i class="fold leaf"></i><svg><use href="#tflat"/></svg>标准层3</li>
<li class="lv3"><i class="fold leaf"></i><svg><use href="#tflat"/></svg>标准层4</li>
</ul>
<div class="side-tabs nav flex-nowrap"><a class="nav-link active" href="#">视图浏览器</a><a class="nav-link" href="#">属性</a></div>
</aside>

<main class="d-flex flex-column flex-grow-1 overflow-hidden">
<div class="view-area flex-grow-1 overflow-hidden">
<svg class="plan" id="plan" width="1597" height="826" viewBox="323 155 1597 826"></svg>
<div class="view-cube">上</div>
</div>
<div class="dock d-flex">
<div class="dock-bar d-flex align-items-center">
<span class="grip lead-grip"></span><input class="command" aria-label="命令" placeholder="在此输入命令">
<span class="rule"></span><button class="plain-btn tool" aria-label="展开"><svg class="i16"><use href="#chev"/></svg></button><span class="grip"></span>
<button class="plain-btn tool on" aria-label="轴线"><svg width="18" height="18"><use href="#redaxis"/></svg></button>
<button class="plain-btn tool" aria-label="墙"><svg class="i16"><use href="#walltrash"/></svg></button>
<button class="plain-btn tool" aria-label="柱"><svg class="i16"><use href="#coltrash"/></svg></button>
<button class="plain-btn tool" aria-label="板"><svg class="i16"><use href="#slabtrash"/></svg></button>
<button class="plain-btn tool on" aria-label="框"><svg width="18" height="18"><use href="#frame"/></svg></button>
<span class="rule"></span>
<button class="plain-btn tool on" aria-label="显示板"><svg class="i16"><use href="#slabi"/></svg></button>
<button class="plain-btn tool on" aria-label="显示梁"><svg class="i16"><use href="#beami"/></svg></button>
<button class="plain-btn tool on" aria-label="显示柱"><svg class="i16"><use href="#coli"/></svg></button>
<button class="plain-btn tool on" aria-label="显示墙"><svg class="i16"><use href="#walli"/></svg></button>
<button class="plain-btn tool on" aria-label="显示洞"><svg width="18" height="18"><use href="#frame4"/></svg></button>
<button class="plain-btn tool on" aria-label="显示房间"><svg width="18" height="18"><use href="#frame5"/></svg></button>
<span class="rule"></span>
<button class="plain-btn tool" aria-label="视图一"><svg class="i16"><use href="#cubef"/></svg></button>
<button class="plain-btn tool" aria-label="视图二"><svg class="i16"><use href="#cubed"/></svg></button>
<button class="plain-btn tool" aria-label="视图三"><svg class="i16"><use href="#cubee"/></svg></button>
<span class="grip"></span>
<button class="plain-btn tool" aria-label="导入PM"><svg class="i16"><use href="#pmin"/></svg></button>
<span class="rule"></span>
<button class="plain-btn tool" aria-label="导出PM"><svg class="i16"><use href="#pmout"/></svg></button>
<button class="plain-btn tool" aria-label="打开PM"><svg class="i16"><use href="#pmopen"/></svg></button>
<button class="plain-btn tool" aria-label="刷新"><svg class="i16"><use href="#rotate"/></svg></button>
<span class="rule"></span>
<button class="plain-btn tool" aria-label="复制层"><svg class="i16"><use href="#copycol"/></svg></button>
<button class="plain-btn tool" aria-label="叠层"><svg class="i16"><use href="#stack"/></svg></button>
<button class="plain-btn tool" aria-label="镜像构件"><svg class="i16"><use href="#halfcol"/></svg></button>
<span class="rule"></span>
<button class="plain-btn tool" aria-label="测量"><svg class="i16"><use href="#ruler"/></svg></button>
<span class="rule"></span>
<button class="plain-btn tool" aria-label="STEP"><svg width="18" height="18"><use href="#step"/></svg></button>
</div>
</div>
</main>
</div>

<footer class="status d-flex align-items-center">
<button class="plain-btn tool" aria-label="打开项目"><svg class="i16"><use href="#newfolder"/></svg></button>
<button class="plain-btn tool" aria-label="分栏"><svg class="i16"><use href="#panes"/></svg></button>
<button class="plain-btn tool" aria-label="新视窗"><svg class="i16"><use href="#addwin"/></svg></button>
<span class="rule"></span>
<button class="plain-btn tool" aria-label="适应"><svg class="i16"><use href="#fit"/></svg></button>
<button class="plain-btn tool" aria-label="平移"><svg class="i16"><use href="#hand"/></svg></button>
<button class="plain-btn tool" aria-label="环绕"><svg class="i16"><use href="#orbit"/></svg></button>
<button class="plain-btn tool" aria-label="缩放"><svg class="i16"><use href="#zoomer"/></svg></button>
<span class="rule"></span>
<button class="plain-btn tool" aria-label="线框"><svg class="i16"><use href="#cube"/></svg></button>
<button class="plain-btn tool" aria-label="隐线"><svg class="i16"><use href="#cubex"/></svg></button>
<button class="plain-btn tool on" aria-label="着色"><svg class="i16"><use href="#cubef"/></svg></button>
<button class="plain-btn tool" aria-label="真实"><svg class="i16"><use href="#cubeb"/></svg></button>
<button class="plain-btn tool" aria-label="光照"><svg class="i16"><use href="#cubeg"/></svg></button>
<span class="rule"></span>
<button class="plain-btn tool on" aria-label="线宽"><svg class="i16"><use href="#linew"/></svg></button>
<button class="plain-btn" aria-label="收起"><svg class="i16"><use href="#chev2"/></svg></button>
<span class="rule wide-rule"></span>
<button class="plain-btn" aria-label="缩小"><svg width="8" height="8"><path d="M0 3h8v2H0z" fill="#999"/></svg></button>
<input type="range" class="zoom ms-1" aria-label="缩放比例" value="50">
<button class="plain-btn ms-1" aria-label="放大"><svg width="8" height="8"><path d="M0 3h8v2H0zM3 0h2v8H3z" fill="#999"/></svg></button>
<div class="coords flex-grow-1 text-center">-11457.14 , 27623.27 , 0.00</div>
<div class="d-flex align-items-center"><button class="plain-btn tool on" aria-label="捕捉"><svg width="18" height="18"><use href="#snapbox"/></svg></button>
<svg width="10" height="8" viewBox="3 4 10 8"><path d="M4.500 10L8 6.500 11.500 10" fill="none" stroke="#555"/></svg></div>
<button class="plain-btn tool on" aria-label="中点"><svg width="18" height="18"><use href="#snapline"/></svg></button>
<button class="plain-btn tool on" aria-label="极轴"><svg width="18" height="18"><use href="#snapang"/></svg></button>
<button class="plain-btn tool" aria-label="正交"><svg class="i16"><use href="#ortho"/></svg></button>
<button class="plain-btn tool" aria-label="栅格"><svg class="i16"><use href="#gridi"/></svg></button>
<button class="plain-btn tool" aria-label="工作面"><svg class="i16"><use href="#diamond"/></svg></button>
<button class="plain-btn tool" aria-label="设置"><svg class="i16"><use href="#gear"/></svg></button>
</footer>

<form class="export-box position-fixed top-50 start-50 translate-middle">
<div class="export-head d-flex align-items-center"><strong class="flex-grow-1">导出PM设置</strong><button type="button" class="plain-btn" aria-label="关闭"><svg width="8" height="8"><use href="#xmark"/></svg></button></div>
<div class="export-body">
<fieldset class="option-set"><legend>转换数据设置</legend>
<div class="pick-grid">
<label class="pick"><input type="checkbox" class="form-check-input" checked>柱</label><label class="pick"><input type="checkbox" class="form-check-input" checked>墙</label><label class="pick"><input type="checkbox" class="form-check-input" checked>墙洞</label><label class="pick"><input type="checkbox" class="form-check-input" checked>板</label>
<label class="pick"><input type="checkbox" class="form-check-input" checked>板洞</label><label class="pick"><input type="checkbox" class="form-check-input" checked>梁</label><label class="pick"><input type="checkbox" class="form-check-input" checked>斜杆</label><label class="pick"><input type="checkbox" class="form-check-input" checked>悬挑板</label>
<label class="pick"><input type="checkbox" class="form-check-input" checked>荷载</label><label class="pick"><input type="checkbox" class="form-check-input" checked>特殊构件定义</label>
</div></fieldset>
<fieldset class="option-set mt-3"><legend>转换参数设置</legend>
<div class="pick-list">
<label class="pick"><input type="checkbox" class="form-check-input">按自然层形成标准层</label>
<label class="pick"><input type="checkbox" class="form-check-input">全楼构件偏心调整</label>
<label class="pick"><input type="checkbox" class="form-check-input" checked>墙根据洞口打断</label>
<label class="pick spaced"><input type="checkbox" class="form-check-input" checked>全楼构件打断</label>
<div class="d-flex align-items-center"><label for="merge">节点归并距离(mm)</label><input id="merge" class="merge-box" type="text" value="50.00"></div>
</div></fieldset>
<div class="d-flex justify-content-end gap-2 mt-4 pt-1"><button type="button" class="btn ok-btn">确定</button><button type="button" class="btn no-btn">取消</button></div>
</div>
</form>

<script>
// Floor plan: axes, slabs and walls, in drawing units of one pixel.
const out = [];
const line = (x1, y1, x2, y2, c) => out.push(`<line x1="${x1 + .5}" y1="${y1 + .5}" x2="${x2 + .5}" y2="${y2 + .5}" class="${c}"/>`);
// x, label, label at the top end too
const cols = [[596,'1',1],[666,'3',1],[747,'5',1],[805,'7',0],[864,'9',0],[944,'11',0],[1085,'15',0],[1165,'17',1],[1224,'19',1],[1282,'21',1],[1362,'23',1],[1433,'25',1]];
const rows = [[476,'F'],[534,'E'],[586,'D'],[625,'C'],[717,'B'],[739,'A']];
const mark = (x, y, t) => out.push(`<circle cx="${x + .5}" cy="${y + .5}" r="7.800" class="axc"/><text x="${x + .5}" y="${y + (t.length > 1 ? 4 : 5.5)}" class="${t.length > 1 ? 'axt2' : 'axt'}">${t}</text>`);
for (const [x, t, top] of cols) {
  if (top) { line(x, 375, x, 456, 'axg'); mark(x, 367, t); }
  line(x, 456, x, 739, 'axr'); line(x, 739, x, 760, 'axrs'); line(x, 760, x, 840, 'axg');
  mark(x, 848, t);
}
for (const [y, t] of rows) {
  line(496, y, 576, y, 'axg'); line(576, y, 1454, y, 'axr'); line(1454, y, 1533, y, 'axg');
  mark(487, y, t); mark(1541, y, t);
}
const slabs = [[1196,417,1259,476],[1033,476,1196,548],[1085,548,1165,739],[1165,534,1282,717],[1251,476,1352,548],[1282,548,1362,739],[1352,476,1415,586],[1362,586,1433,717],
  [770,417,833,476],[614,476,676,586],[676,476,996,548],[666,548,747,739],[596,586,666,717],[747,534,864,717],[864,548,944,739]];
for (const [a, b, c, d] of slabs) out.push(`<rect x="${a}" y="${b}" width="${c - a}" height="${d - b}" class="slab"/>`);
for (const [a, b, c, d] of [[1196,476,1251,580],[1201,580,1246,625]]) out.push(`<rect x="${a}" y="${b}" width="${c - a}" height="${d - b}" class="stair"/>`);
line(1224, 472, 1224, 625, 'axf'); line(1198, 534, 1250, 534, 'axf'); line(1203, 586, 1245, 586, 'axf');
// x1, y1, x2, y2, kind: c wall, b beam, o opening
const walls = [
  [1196,417,1259,417,'c'],[1212,417,1243,417,'b'],[1033,476,1145,476,'c'],[1145,476,1299,476,'c'],[1299,476,1415,476,'c'],
  [1156,476,1180,476,'o'],[1267,476,1291,476,'o'],[1310,476,1338,476,'o'],[1370,476,1399,476,'o'],
  [1196,580,1251,580,'c'],[1165,534,1196,534,'c'],[1251,534,1282,534,'c'],[1282,548,1352,548,'b'],[1095,548,1165,548,'b'],[1352,586,1433,586,'c'],
  [1165,625,1201,625,'b'],[1201,625,1246,625,'c'],[1246,625,1282,625,'b'],[1165,717,1224,717,'c'],[1224,717,1282,717,'c'],[1183,717,1207,717,'o'],[1240,717,1264,717,'o'],
  [1362,717,1433,717,'c'],[1380,717,1417,717,'o'],[1282,739,1362,739,'c'],[1298,739,1346,739,'o'],[1085,739,1165,739,'c'],[1101,739,1150,739,'o'],
  [1196,417,1196,476,'c'],[1259,417,1259,476,'c'],[1196,476,1196,534,'c'],[1196,534,1196,576,'b'],[1196,576,1196,580,'c'],[1251,476,1251,534,'c'],[1251,534,1251,576,'b'],[1251,576,1251,580,'c'],
  [1201,580,1201,593,'c'],[1201,593,1201,613,'b'],[1201,613,1201,625,'c'],[1246,580,1246,593,'c'],[1246,593,1246,613,'b'],[1246,613,1246,625,'c'],
  [1165,534,1165,550,'c'],[1165,550,1165,625,'b'],[1165,625,1165,661,'b'],[1165,661,1165,739,'c'],[1282,534,1282,550,'c'],[1282,550,1282,625,'b'],[1282,625,1282,661,'b'],[1282,661,1282,739,'c'],
  [1352,476,1352,526,'c'],[1352,526,1352,586,'b'],[1415,476,1415,586,'c'],[1415,550,1415,566,'o'],[1433,586,1433,717,'c'],[1433,606,1433,625,'o'],
  [1362,586,1362,629,'c'],[1362,629,1362,717,'b'],[1362,717,1362,739,'c'],[1224,625,1224,681,'b'],[1224,681,1224,717,'c'],[1085,586,1085,739,'c'],
  [770,417,833,417,'c'],[614,476,727,476,'c'],[727,476,996,476,'c'],[632,476,661,476,'o'],[691,476,719,476,'o'],[738,476,763,476,'o'],
  [676,548,747,548,'b'],[596,586,676,586,'c'],[747,534,778,534,'c'],[747,625,864,625,'b'],[596,717,666,717,'c'],[612,717,649,717,'o'],[747,717,864,717,'c'],[765,717,789,717,'o'],
  [666,739,747,739,'c'],[682,739,731,739,'o'],[864,739,944,739,'c'],[880,739,928,739,'o'],
  [770,417,770,476,'c'],[614,476,614,586,'c'],[614,550,614,566,'o'],[676,476,676,526,'c'],[676,526,676,586,'b'],[596,586,596,717,'c'],[596,602,596,620,'o'],
  [666,586,666,629,'c'],[666,629,666,717,'b'],[666,717,666,739,'c'],[747,534,747,550,'c'],[747,550,747,625,'b'],[747,625,747,661,'b'],[747,661,747,739,'c'],
  [778,476,778,534,'c'],[778,534,778,576,'b'],[778,576,778,580,'c'],[783,580,783,625,'c'],[864,661,864,739,'c'],[944,661,944,739,'c']];
for (const [a, b, c, d, k] of walls) {
  const flat = b === d;
  out.push(`<rect x="${a + .5 - (flat ? 0 : 2)}" y="${b + .5 - (flat ? 2 : 0)}" width="${flat ? c - a : 4}" height="${flat ? 4 : d - b}" class="w${k}"/>`);
}
out.push('<path d="M596.500 684v56" stroke="#00c8a0" stroke-width="2"/><path d="M597 739.500h55" stroke="#f11" stroke-width="2"/>');
out.push('<text x="596.500" y="674" class="ucs">Y</text><text x="596.500" y="746" class="ucs">Z</text><text x="668" y="746" class="ucs">X</text>');
document.getElementById('plan').innerHTML = out.join('');
</script>
</body>
</html>
